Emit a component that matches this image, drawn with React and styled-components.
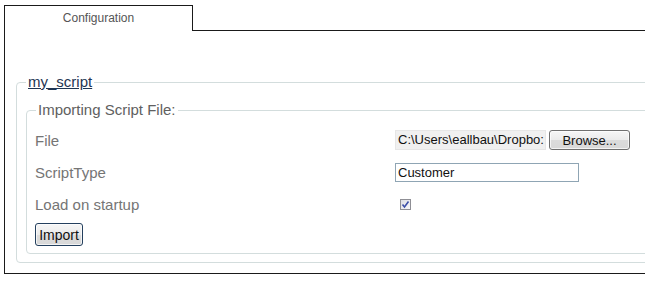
import React from "react";
import styled, { createGlobalStyle } from "styled-components";

const GlobalStyle = createGlobalStyle`
  html, body {
    margin: 0;
    padding: 0;
    overflow: hidden;
    background: #ffffff;
  }
  body {
    font-family: "Liberation Sans", Arial, sans-serif;
  }
`;

const Page = styled.div`
  padding: 5px 0 0 4px;
  width: 680px;
`;

const TabStrip = styled.div`
  display: flex;
  height: 26px;
`;

const Tab = styled.div`
  width: 189px;
  border: 1px solid #1a1a1a;
  border-bottom: none;
  display: flex;
  justify-content: center;
  padding-top: 5px;
  box-sizing: border-box;
  font-size: 12px;
  color: #555555;
`;

const TabFill = styled.div`
  flex: 1;
  border-bottom: 1px solid #1a1a1a;
`;

const Panel = styled.div`
  border-left: 1px solid #1a1a1a;
  border-bottom: 1px solid #1a1a1a;
  padding: 43px 0 10px 11px;
`;

const Group = styled.fieldset`
  margin: 0;
  border: 1px solid #d3dddd;
  border-radius: 4px;
  padding: ${(p) => p.$pad};
  min-width: 0;
`;

const Legend = styled.legend`
  margin-left: ${(p) => (p.$link ? "0" : "1px")};
  padding: 0 2px;
  font-size: 15px;
  line-height: 16px;
  color: ${(p) => (p.$link ? "#1f3654" : "#606060")};
  text-decoration: ${(p) => (p.$link ? "underline" : "none")};
`;

const Row = styled.div`
  display: grid;
  grid-template-columns: 360px auto;
  align-items: center;
  height: 32px;
`;

const Label = styled.span`
  font-size: 15px;
  color: #757575;
`;

const Controls = styled.div`
  display: flex;
  align-items: center;
  gap: 3px;
`;

const FileBox = styled.div`
  width: 151px;
  height: 20px;
  box-sizing: border-box;
  background: #f0f0f0;
  border: 1px solid #e6e6e6;
  padding: 1px 0 0 2px;
  font-size: 13px;
  color: #111;
  white-space: nowrap;
  overflow: hidden;
`;

const Button = styled.button`
  font-family: "Liberation Sans", Arial, sans-serif;
  font-size: ${(p) => p.$size || "13px"};
  color: #111;
  height: ${(p) => p.$height};
  width: ${(p) => p.$width};
  padding: 0;
  border: 1px solid ${(p) => p.$edge};
  border-radius: 3px;
  background: linear-gradient(#f6f6f6 0%, #ebebeb 50%, #dcdcdc 51%, #d8d8d8 100%);
  box-shadow: inset 0 0 0 1px rgba(255, 255, 255, 0.7);
`;

const TextInput = styled.input`
  width: 184px;
  height: 19px;
  box-sizing: border-box;
  border: 1px solid #8fa5b4;
  padding: 0 2px;
  font-family: "Liberation Sans", Arial, sans-serif;
  font-size: 13px;
  color: #111;
  outline: none;
`;

const Check = styled.span`
  display: inline-flex;
  align-items: center;
  justify-content: center;
  width: 11px;
  height: 11px;
  margin-left: 5px;
  box-sizing: border-box;
  border: 1px solid #8f8f95;
  background: linear-gradient(135deg, #dcdde3, #f7f7fa);
`;

const ImportRow = styled.div`
  padding-top: 3px;
`;

export default function App() {
  return (
    <>
      <GlobalStyle />
      <Page>
        <TabStrip>
          <Tab>Configuration</Tab>
          <TabFill />
        </TabStrip>
        <Panel>
          <Group $pad="12px 0 8px 9px">
            <Legend $link>my_script</Legend>
            <Group $pad="6px 0 7px 8px">
              <Legend>Importing Script File:</Legend>
              <Row>
                <Label>File</Label>
                <Controls>
                  <FileBox>C:\Users\eallbau\Dropbo:</FileBox>
                  <Button $edge="#707070" $width="81px" $height="20px">
                    Browse...
                  </Button>
                </Controls>
              </Row>
              <Row>
                <Label>ScriptType</Label>
                <Controls>
                  <TextInput defaultValue="Customer" />
                </Controls>
              </Row>
              <Row>
                <Label>Load on startup</Label>
                <Controls>
                  <Check>
                    <svg width="9" height="9" viewBox="0 0 9 9">
                      <path d="M1.5 4.5 L3.5 7 L7.5 1.5" fill="none" stroke="#3c4fa8" strokeWidth="1.6" />
                    </svg>
                  </Check>
                </Controls>
              </Row>
              <ImportRow>
                <Button $edge="#24405e" $width="48px" $height="23px" $size="14px">
                  Import
                </Button>
              </ImportRow>
            </Group>
          </Group>
        </Panel>
      </Page>
    </>
  );
}
